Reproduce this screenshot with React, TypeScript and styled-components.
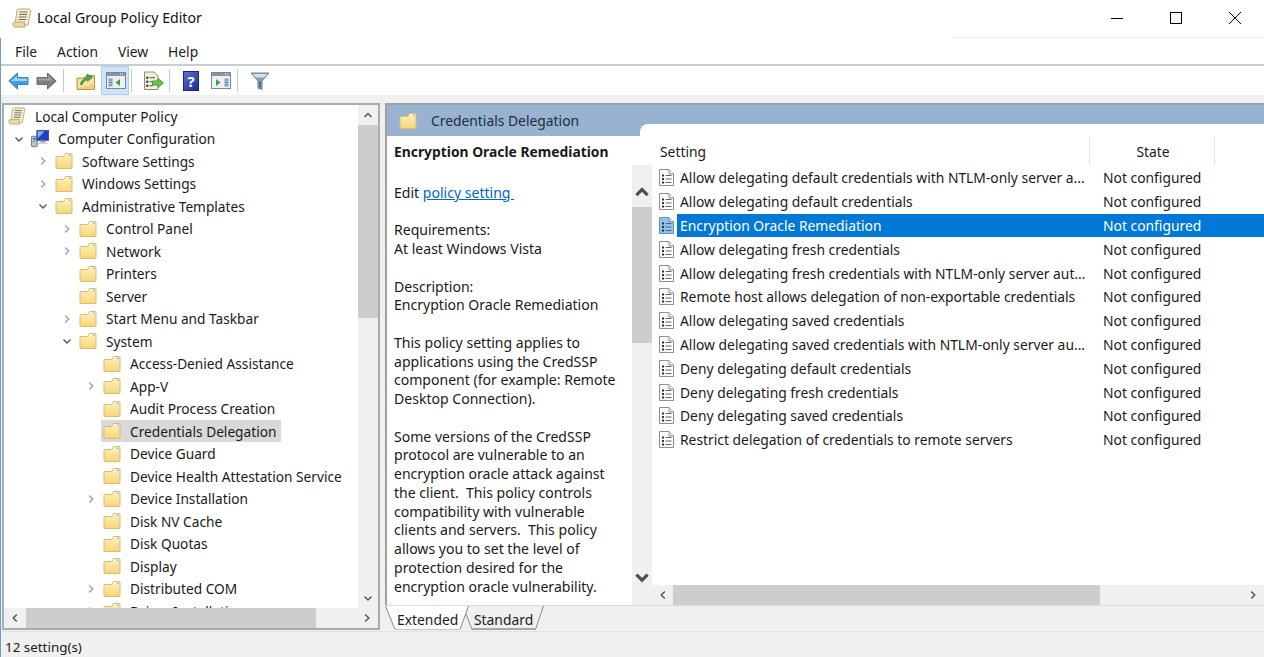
import React from 'react';
import styled, { createGlobalStyle } from 'styled-components';

type IconKind = 'scroll' | 'computer' | 'folder';

type TreeNode = {
  label: string;
  level: number;
  icon: IconKind;
  chevron?: 'open' | 'closed';
  selected?: boolean;
};

const treeNodes: TreeNode[] = [
  { label: 'Local Computer Policy', level: 0, icon: 'scroll' },
  { label: 'Computer Configuration', level: 1, icon: 'computer', chevron: 'open' },
  { label: 'Software Settings', level: 2, icon: 'folder', chevron: 'closed' },
  { label: 'Windows Settings', level: 2, icon: 'folder', chevron: 'closed' },
  { label: 'Administrative Templates', level: 2, icon: 'folder', chevron: 'open' },
  { label: 'Control Panel', level: 3, icon: 'folder', chevron: 'closed' },
  { label: 'Network', level: 3, icon: 'folder', chevron: 'closed' },
  { label: 'Printers', level: 3, icon: 'folder' },
  { label: 'Server', level: 3, icon: 'folder' },
  { label: 'Start Menu and Taskbar', level: 3, icon: 'folder', chevron: 'closed' },
  { label: 'System', level: 3, icon: 'folder', chevron: 'open' },
  { label: 'Access-Denied Assistance', level: 4, icon: 'folder' },
  { label: 'App-V', level: 4, icon: 'folder', chevron: 'closed' },
  { label: 'Audit Process Creation', level: 4, icon: 'folder' },
  { label: 'Credentials Delegation', level: 4, icon: 'folder', selected: true },
  { label: 'Device Guard', level: 4, icon: 'folder' },
  { label: 'Device Health Attestation Service', level: 4, icon: 'folder' },
  { label: 'Device Installation', level: 4, icon: 'folder', chevron: 'closed' },
  { label: 'Disk NV Cache', level: 4, icon: 'folder' },
  { label: 'Disk Quotas', level: 4, icon: 'folder' },
  { label: 'Display', level: 4, icon: 'folder' },
  { label: 'Distributed COM', level: 4, icon: 'folder', chevron: 'closed' },
  { label: 'Driver Installation', level: 4, icon: 'folder', chevron: 'closed' },
];

const settings = [
  'Allow delegating default credentials with NTLM-only server a...',
  'Allow delegating default credentials',
  'Encryption Oracle Remediation',
  'Allow delegating fresh credentials',
  'Allow delegating fresh credentials with NTLM-only server aut...',
  'Remote host allows delegation of non-exportable credentials',
  'Allow delegating saved credentials',
  'Allow delegating saved credentials with NTLM-only server au...',
  'Deny delegating default credentials',
  'Deny delegating fresh credentials',
  'Deny delegating saved credentials',
  'Restrict delegation of credentials to remote servers',
];

const FolderIcon = () => (
  <svg width="18" height="18" viewBox="0 0 18 18">
    <defs>
      <linearGradient id="folderFace" x1="0" y1="0" x2="0" y2="1">
        <stop offset="0" stopColor="#fff1bd" />
        <stop offset="1" stopColor="#f5d678" />
      </linearGradient>
    </defs>
    <path d="M1 5.5Q1 4.5 2 4.5H8.8L10.5 1.5H16Q17 1.5 17 2.5V15.5Q17 16.5 16 16.5H2Q1 16.5 1 15.5Z" fill="url(#folderFace)" stroke="#d9bb73" />
    <path d="M11 2.6H16V4H10.2Z" fill="#fffbe8" />
    <path d="M13.6 2.6H15.9V3.9H13.6Z" fill="#8dbbe0" />
  </svg>
);

const ScrollIcon = () => (
  <svg width="20" height="20" viewBox="0 0 20 20">
    <path d="M5 2.5C5 1.5 6 1 7 1H17.5C18.5 1 19 2 18.5 3L16 17H3L5 2.5Z" fill="#f7eed2" stroke="#b9a675" />
    <path d="M1 15.5C1 14 2 14 3 14H13C12 15 12 17 13 19H3C1.5 19 1 17 1 15.5Z" fill="#ecd9a6" stroke="#b9a675" />
    <path d="M7.5 4H15.5M7 6.5H15M6.8 9H14.6M6.4 11.5H14.2" stroke="#6f6a5c" strokeWidth="1" />
  </svg>
);

const ComputerIcon = () => (
  <svg width="20" height="20" viewBox="0 0 20 20">
    <rect x="0.5" y="7" width="6.5" height="11.5" rx="1" fill="#b8c4d2" stroke="#5e6f85" />
    <rect x="2" y="9" width="3.5" height="1.5" fill="#2d5fb0" />
    <rect x="2" y="12" width="3.5" height="1" fill="#7d8a9a" />
    <rect x="6.5" y="0.5" width="13" height="11" fill="#1f3fc4" stroke="#46566c" />
    <path d="M7.5 1.5H15L7.5 9.5Z" fill="#86aff2" />
    <rect x="10.5" y="11.5" width="5.5" height="2.5" fill="#8f9db0" />
    <rect x="8" y="14" width="10.5" height="1.5" fill="#c3ccd7" />
  </svg>
);

const DocIcon = ({ active }: { active: boolean }) => (
  <svg width="15" height="17" viewBox="0 0 15 17">
    <path d="M0.5 0.5H10L14.5 5V16.5H0.5Z" fill={active ? '#93c1e8' : '#ffffff'} stroke={active ? '#5a93c7' : '#8f8f8f'} />
    <path d="M10 0.5V5H14.5" fill={active ? '#bcd9f1' : '#e6e9ec'} stroke={active ? '#5a93c7' : '#8f8f8f'} />
    <path d="M3 5.5H5V7.5H3ZM3 9H5V11H3ZM3 12.5H5V14.5H3Z" fill="#22304a" />
    <path d="M6.5 6.5H12.5M6.5 10H12.5M6.5 13.5H12.5" stroke="#5c6470" strokeWidth="1" />
  </svg>
);

const nodeIcon = (kind: IconKind) => {
  if (kind === 'scroll') return <ScrollIcon />;
  if (kind === 'computer') return <ComputerIcon />;
  return <FolderIcon />;
};

const Chevron = ({ dir, color = '#7a7a7a', width = 1.4, size = 10 }: { dir: 'up' | 'down' | 'left' | 'right'; color?: string; width?: number; size?: number }) => {
  const paths = {
    up: 'M1.5 7L5 3.5L8.5 7',
    down: 'M1.5 3.5L5 7L8.5 3.5',
    left: 'M6.8 1.5L3.2 5L6.8 8.5',
    right: 'M3.2 1.5L6.8 5L3.2 8.5',
  };
  return (
    <svg width={size} height={size} viewBox="0 0 10 10">
      <path d={paths[dir]} fill="none" stroke={color} strokeWidth={width} />
    </svg>
  );
};

const BackIcon = () => (
  <svg width="21" height="18" viewBox="0 0 21 18">
    <path d="M0.8 9L9.5 1V5.5H20V12.5H9.5V17Z" fill="#3f9fe6" stroke="#3183c6" />
    <path d="M3 9L9 4V6.5H19V9Z" fill="#9ad6f8" />
  </svg>
);

const ForwardIcon = () => (
  <svg width="21" height="18" viewBox="0 0 21 18">
    <path d="M20.2 9L11.5 1V5.5H1V12.5H11.5V17Z" fill="#7f7f7f" stroke="#6c6c6c" />
    <path d="M2 6.5H12V4L17 8.5H2Z" fill="#a2a2a2" />
  </svg>
);

const UpFolderIcon = () => (
  <svg width="20" height="20" viewBox="0 0 20 20">
    <path d="M1 7H8L10 4.5H18.5V18.5H1Z" fill="#efcf74" stroke="#b99a4b" />
    <path d="M2 8.5H18V13L2 17Z" fill="#f8e5a6" />
    <path d="M4 13C6 9 9 6.5 11 6V3L16.5 6L11.5 10.5V8.5C9 9.5 7 11 6 14Z" fill="#45a648" stroke="#2f7f33" strokeWidth="0.6" />
  </svg>
);

const PaneToggleIcon = ({ side }: { side: 'left' | 'right' }) => (
  <svg width="20" height="17" viewBox="0 0 20 17">
    <rect x="0.5" y="0.5" width="19" height="16" fill="#eef1f4" stroke="#7d8794" />
    <rect x="1" y="1" width="18" height="3" fill="#8a94a0" />
    <path d="M14 2H15M16 2H17" stroke="#fff" />
    {side === 'left' ? (
      <>
        <rect x="2" y="6" width="5" height="9" fill="#b9cce0" />
        <path d="M3 8H6M3 10.5H6M3 13H6" stroke="#4f6f92" />
        <path d="M14 7V14L9.5 10.5Z" fill="#39a33d" />
      </>
    ) : (
      <>
        <path d="M5 7V14L9.5 10.5Z" fill="#39a33d" />
        <rect x="13" y="6" width="5" height="9" fill="#b9cce0" />
        <path d="M14 8H17M14 10.5H17M14 13H17" stroke="#4f6f92" />
      </>
    )}
  </svg>
);

const ExportIcon = () => (
  <svg width="21" height="20" viewBox="0 0 21 20">
    <path d="M1.5 1H11L15 5V18.5H1.5Z" fill="#f6f0da" stroke="#8d8a7e" />
    <path d="M3.5 6H5V7.5H3.5ZM3.5 10H5V11.5H3.5ZM3.5 14H5V15.5H3.5ZM6.5 6.7H12M6.5 10.7H10M6.5 14.7H10" stroke="#4f5a66" strokeWidth="1" />
    <path d="M20.5 12L15 7.5V10H9.5V14H15V16.5Z" fill="#6cc24a" stroke="#4c9a32" />
  </svg>
);

const FilterIcon = () => (
  <svg width="20" height="20" viewBox="0 0 20 20">
    <path d="M1 2H19L12 10V18.5L8 17V10Z" fill="#8ba1b3" stroke="#6d8395" />
    <path d="M2.5 3H17.5L14 6.5H6Z" fill="#d3e0ea" />
    <path d="M9 10.5H11V17L9 16.3Z" fill="#5b6f80" />
  </svg>
);

export default function App() {
  return (
    <Page>
      <GlobalStyle />
      <TitleBar>
        <TitleLeft>
          <ScrollIcon />
          <span>Local Group Policy Editor</span>
        </TitleLeft>
        <WindowButtons>
          <WindowButton>
            <svg width="12" height="12" viewBox="0 0 12 12"><path d="M0 6.5H12" stroke="#000" /></svg>
          </WindowButton>
          <WindowButton>
            <svg width="12" height="12" viewBox="0 0 12 12"><rect x="0.5" y="0.5" width="11" height="11" fill="none" stroke="#000" /></svg>
          </WindowButton>
          <WindowButton>
            <svg width="12" height="12" viewBox="0 0 12 12"><path d="M0 0L12 12M12 0L0 12" stroke="#000" /></svg>
          </WindowButton>
        </WindowButtons>
      </TitleBar>
      <MenuBar>
        {['File', 'Action', 'View', 'Help'].map(item => (
          <MenuItem key={item}>{item}</MenuItem>
        ))}
      </MenuBar>
      <Toolbar>
        <ToolButton $w={28}><BackIcon /></ToolButton>
        <ToolButton $w={29}><ForwardIcon /></ToolButton>
        <ToolSeparator />
        <ToolButton $w={36} $pl={6}><UpFolderIcon /></ToolButton>
        <ToolButton $w={28} $pl={2} $active><PaneToggleIcon side="left" /></ToolButton>
        <ToolSeparator />
        <ToolButton $w={34} $pl={6}><ExportIcon /></ToolButton>
        <ToolSeparator />
        <ToolButton $w={35} $pl={5}><Help>?</Help></ToolButton>
        <ToolButton $w={29}><PaneToggleIcon side="right" /></ToolButton>
        <ToolSeparator />
        <ToolButton $w={42}><FilterIcon /></ToolButton>
      </Toolbar>
      <Main>
        <TreePane>
          <TreeTop>
            <TreeClip>
              {treeNodes.map(node => (
                <TreeRow key={node.label} $level={node.level}>
                  {node.level > 0 && (
                    <ChevronSlot>
                      {node.chevron && (
                        <Chevron dir={node.chevron === 'open' ? 'down' : 'right'} color={node.chevron === 'open' ? '#555' : '#a0a0a0'} />
                      )}
                    </ChevronSlot>
                  )}
                  <TreeItem $selected={node.selected}>
                    <NodeIcon>{nodeIcon(node.icon)}</NodeIcon>
                    <NodeLabel>{node.label}</NodeLabel>
                  </TreeItem>
                </TreeRow>
              ))}
            </TreeClip>
            <VScroll>
              <ArrowCell><Chevron dir="up" color="#505050" /></ArrowCell>
              <TreeThumb />
              <Spacer />
              <ArrowCell><Chevron dir="down" color="#505050" /></ArrowCell>
            </VScroll>
          </TreeTop>
          <HScroll>
            <HArrow><Chevron dir="left" color="#505050" /></HArrow>
            <TreeHThumb />
            <Spacer />
            <HArrow><Chevron dir="right" color="#505050" /></HArrow>
          </HScroll>
        </TreePane>
        <DetailPane>
          <HeaderBand>
            <HeaderFolder><FolderIcon /></HeaderFolder>
            <HeaderTitle>Credentials Delegation</HeaderTitle>
          </HeaderBand>
          <DetailBody>
            <Description>
              <DescText>
                <DescTitle>Encryption Oracle Remediation</DescTitle>
                <EditLine>Edit <PolicyLink href="#">policy setting&nbsp;</PolicyLink></EditLine>
                <DescPara>Requirements:<br />At least Windows Vista</DescPara>
                <DescPara>Description:<br />Encryption Oracle Remediation</DescPara>
                <DescPara>
                  This policy setting applies to<br />
                  applications using the CredSSP<br />
                  component (for example: Remote<br />
                  Desktop Connection).
                </DescPara>
                <DescPara>
                  Some versions of the CredSSP<br />
                  protocol are vulnerable to an<br />
                  encryption oracle attack against<br />
                  the client.&nbsp; This policy controls<br />
                  compatibility with vulnerable<br />
                  clients and servers.&nbsp; This policy<br />
                  allows you to set the level of<br />
                  protection desired for the<br />
                  encryption oracle vulnerability.
                </DescPara>
              </DescText>
              <DescScroll>
                <BigArrow $up><Chevron dir="up" color="#505050" width={2} size={16} /></BigArrow>
                <DescThumb />
                <Spacer />
                <BigArrow><Chevron dir="down" color="#505050" width={2} size={16} /></BigArrow>
              </DescScroll>
            </Description>
            <ListArea>
              <ListTab>
                <ColumnHeader>
                  <SettingHead>Setting</SettingHead>
                  <StateHead>State</StateHead>
                </ColumnHeader>
                <Rows>
                  {settings.map((name, i) => (
                    <ListRow key={name}>
                      <DocSlot><DocIcon active={i === 2} /></DocSlot>
                      <RowBody $selected={i === 2}>
                        <RowName>{name}</RowName>
                        <RowState>Not configured</RowState>
                      </RowBody>
                    </ListRow>
                  ))}
                </Rows>
              </ListTab>
              <ListHScroll>
                <ListArrow><Chevron dir="left" color="#505050" /></ListArrow>
                <ListThumb />
                <Spacer />
                <HArrow><Chevron dir="right" color="#505050" /></HArrow>
              </ListHScroll>
            </ListArea>
          </DetailBody>
          <TabStrip>
            <Tab $active>
              <TabShape width="84" height="24" viewBox="0 0 84 24">
                <path d="M0.5 0L10 23.5H75L83.5 0" fill="#fff" stroke="#8a8a8a" />
                <path d="M10 23.5H75" stroke="#c4c4c4" />
              </TabShape>
              <TabLabel>Extended</TabLabel>
            </Tab>
            <Tab>
              <TabShape width="78" height="24" viewBox="0 0 78 24">
                <path d="M0 8L6 23.5H69.5L77.5 0" fill="#f0f0f0" stroke="#8a8a8a" />
                <path d="M6 23H69.5" stroke="#a8a8a8" strokeWidth="2" />
              </TabShape>
              <TabLabel>Standard</TabLabel>
            </Tab>
          </TabStrip>
        </DetailPane>
      </Main>
      <StatusBar>12 setting(s)</StatusBar>
    </Page>
  );
}

const GlobalStyle = createGlobalStyle`
  html, body {
    margin: 0;
    padding: 0;
    background: #f0f0f0;
    overflow: hidden;
  }
  * {
    box-sizing: border-box;
  }
`;

const Page = styled.div`
  width: 1264px;
  height: 657px;
  display: flex;
  flex-direction: column;
  position: relative;
  background: #f0f0f0;
  color: #1a1a1a;
  font-family: "Noto Sans", "Open Sans", sans-serif;
  font-size: 13.85px;
  overflow: hidden;
  &::before {
    content: '';
    position: absolute;
    left: 0;
    top: 0;
    bottom: 0;
    width: 1px;
    background: #6f9cc6;
  }
`;

const TitleBar = styled.div`
  height: 38px;
  background: #fff;
  display: flex;
  justify-content: space-between;
  align-items: flex-start;
  position: relative;
  flex: none;
  &::after {
    content: '';
    position: absolute;
    right: 0;
    bottom: 0;
    width: 312px;
    height: 1px;
    background: #eeeeee;
  }
`;

const TitleLeft = styled.div`
  display: flex;
  align-items: center;
  gap: 5px;
  height: 35px;
  padding-left: 12px;
  font-size: 14.1px;
  color: #111;
`;

const WindowButtons = styled.div`
  display: flex;
`;

const WindowButton = styled.div`
  width: 59px;
  height: 36px;
  display: flex;
  align-items: center;
  justify-content: center;
`;

const MenuBar = styled.div`
  height: 28px;
  background: #fff;
  border-bottom: 2px solid #c9ccd1;
  display: flex;
  align-items: center;
  padding-left: 15px;
  gap: 20px;
  font-size: 13.8px;
  flex: none;
`;

const MenuItem = styled.span`
  color: #1a1a1a;
`;

const Toolbar = styled.div`
  height: 29px;
  background: #fff;
  display: flex;
  align-items: stretch;
  padding-left: 4px;
  flex: none;
`;

const ToolButton = styled.div<{ $w: number; $pl?: number; $active?: boolean }>`
  width: ${({ $w }) => $w}px;
  padding-left: ${({ $pl }) => $pl ?? 0}px;
  display: flex;
  align-items: center;
  justify-content: center;
  background: ${({ $active }) => ($active ? '#cce4f7' : 'transparent')};
  box-shadow: ${({ $active }) => ($active ? 'inset 0 0 0 1px #a8d2f0' : 'none')};
`;

const ToolSeparator = styled.div`
  width: 1px;
  margin: 3px 1px 3px 2px;
  background: #c8c8c8;
`;

const Help = styled.div`
  width: 16px;
  height: 20px;
  background: linear-gradient(135deg, #5a72d4, #1c2f90);
  border: 1px solid #1b2a78;
  color: #fff;
  font-weight: 700;
  font-size: 15px;
  line-height: 18px;
  text-align: center;
`;

const Main = styled.div`
  height: 528px;
  margin-top: 8px;
  display: flex;
  padding-left: 2px;
  gap: 5px;
  flex: none;
`;

const TreePane = styled.div`
  width: 378px;
  height: 527px;
  background: #fff;
  border: 2px solid #a7adb5;
  display: flex;
  flex-direction: column;
  font-size: 13.7px;
`;

const TreeTop = styled.div`
  flex: 1;
  min-height: 0;
  display: flex;
`;

const TreeClip = styled.div`
  flex: 1;
  overflow: hidden;
`;

const TreeRow = styled.div<{ $level: number }>`
  height: 22.5px;
  display: flex;
  align-items: center;
  padding-left: ${({ $level }) => ($level === 0 ? 2 : 8 + ($level - 1) * 24)}px;
  white-space: nowrap;
`;

const ChevronSlot = styled.span`
  width: 13px;
  margin-right: 4px;
  display: flex;
  justify-content: center;
  flex: none;
`;

const TreeItem = styled.span<{ $selected?: boolean }>`
  display: flex;
  align-items: center;
  height: 22px;
  padding: 0 5px 0 2px;
  background: ${({ $selected }) => ($selected ? '#d9d9d9' : 'transparent')};
`;

const NodeIcon = styled.span`
  width: 18px;
  height: 20px;
  display: flex;
  align-items: center;
  flex: none;
`;

const NodeLabel = styled.span`
  margin-left: 9px;
  line-height: 21px;
`;

const VScroll = styled.div`
  width: 20px;
  background: #f0f0f0;
  display: flex;
  flex-direction: column;
`;

const ArrowCell = styled.div`
  height: 20px;
  display: flex;
  align-items: center;
  justify-content: center;
  flex: none;
`;

const TreeThumb = styled.div`
  height: 193px;
  background: #cdcdcd;
  flex: none;
`;

const Spacer = styled.div`
  flex: 1;
`;

const HScroll = styled.div`
  height: 20px;
  background: #f0f0f0;
  display: flex;
  flex: none;
`;

const HArrow = styled.div`
  width: 22px;
  display: flex;
  align-items: center;
  justify-content: center;
  flex: none;
`;

const TreeHThumb = styled.div`
  width: 290px;
  background: #cdcdcd;
`;

const DetailPane = styled.div`
  flex: 1;
  min-width: 0;
  display: flex;
  flex-direction: column;
  border-top: 2px solid #a0a0a0;
  border-left: 2px solid #a0a0a0;
  height: 528px;
`;

const HeaderBand = styled.div`
  height: 31px;
  background: #98b3d1;
  display: flex;
  align-items: center;
  padding-left: 12px;
  flex: none;
`;

const HeaderFolder = styled.span`
  display: flex;
  margin-right: 14px;
`;

const HeaderTitle = styled.span`
  color: #222c38;
`;

const DetailBody = styled.div`
  height: 469px;
  display: flex;
  background: #fff;
  flex: none;
`;

const Description = styled.div`
  width: 265px;
  display: flex;
  flex: none;
`;

const DescText = styled.div`
  width: 245px;
  padding: 7px 0 0 7px;
  line-height: 18.75px;
  font-size: 14.05px;
  overflow: hidden;
  white-space: nowrap;
`;

const DescTitle = styled.div`
  font-weight: 700;
  font-size: 13.85px;
`;

const EditLine = styled.div`
  margin-top: 22px;
`;

const PolicyLink = styled.a`
  color: #0066cc;
  text-decoration: underline;
`;

const DescPara = styled.p`
  margin: 18.75px 0 0;
`;

const DescScroll = styled.div`
  width: 20px;
  margin-top: 29px;
  background: #f0f0f0;
  display: flex;
  flex-direction: column;
`;

const BigArrow = styled.div<{ $up?: boolean }>`
  height: 42px;
  display: flex;
  align-items: ${({ $up }) => ($up ? 'flex-end' : 'flex-start')};
  justify-content: center;
  padding: ${({ $up }) => ($up ? '0 0 7px' : '6px 0 0')};
  flex: none;
`;

const DescThumb = styled.div`
  height: 136px;
  background: #cdcdcd;
  flex: none;
`;

const ListArea = styled.div`
  flex: 1;
  min-width: 0;
  display: flex;
  flex-direction: column;
`;

const ListTab = styled.div`
  flex: 1;
  position: relative;
  &::before {
    content: '';
    position: absolute;
    left: -12px;
    top: -12px;
    right: 0;
    height: 12px;
    background: #fff;
    border-radius: 8px 0 0 0;
  }
`;

const ColumnHeader = styled.div`
  height: 30px;
  display: flex;
  align-items: center;
`;

const SettingHead = styled.div`
  width: 438px;
  height: 100%;
  padding-left: 8px;
  display: flex;
  align-items: center;
  border-right: 1px solid #e5e5e5;
`;

const StateHead = styled.div`
  width: 125px;
  height: 100%;
  padding-left: 2px;
  display: flex;
  align-items: center;
  justify-content: center;
  border-right: 1px solid #e5e5e5;
`;

const Rows = styled.div`
  margin-top: 0;
`;

const ListRow = styled.div`
  height: 23.8px;
  display: flex;
  align-items: center;
`;

const DocSlot = styled.span`
  width: 25px;
  padding-left: 7px;
  display: flex;
  flex: none;
`;

const RowBody = styled.div<{ $selected: boolean }>`
  flex: 1;
  height: 100%;
  display: flex;
  align-items: center;
  background: ${({ $selected }) => ($selected ? '#0078d7' : 'transparent')};
  color: ${({ $selected }) => ($selected ? '#fff' : 'inherit')};
`;

const RowName = styled.span`
  width: 426px;
  padding-left: 3px;
  white-space: nowrap;
  overflow: hidden;
  flex: none;
`;

const RowState = styled.span`
  white-space: nowrap;
`;

const ListHScroll = styled.div`
  height: 20px;
  background: #f0f0f0;
  display: flex;
  flex: none;
`;

const ListArrow = styled(HArrow)`
  width: 21px;
`;

const ListThumb = styled.div`
  width: 427px;
  background: #cdcdcd;
`;

const TabStrip = styled.div`
  height: 26px;
  background: #f0f0f0;
  border-top: 1px solid #dcdcdc;
  display: flex;
  align-items: flex-start;
  flex: none;
  margin-left: -2px;
`;

const Tab = styled.div<{ $active?: boolean }>`
  width: ${({ $active }) => ($active ? 84 : 78)}px;
  height: 24px;
  margin-left: ${({ $active }) => ($active ? 0 : -3)}px;
  padding-left: ${({ $active }) => ($active ? 12 : 8)}px;
  position: relative;
  z-index: ${({ $active }) => ($active ? 1 : 0)};
  display: flex;
  align-items: center;
`;

const TabShape = styled.svg`
  position: absolute;
  left: 0;
  top: 0;
`;

const TabLabel = styled.span`
  position: relative;
  padding-top: 3px;
`;

const StatusBar = styled.div`
  flex: 1;
  display: flex;
  align-items: center;
  padding: 4px 0 0 5px;
  font-size: 13.4px;
  background: #f0f0f0;
  border-top: 1px solid #e3e3e3;
`;
